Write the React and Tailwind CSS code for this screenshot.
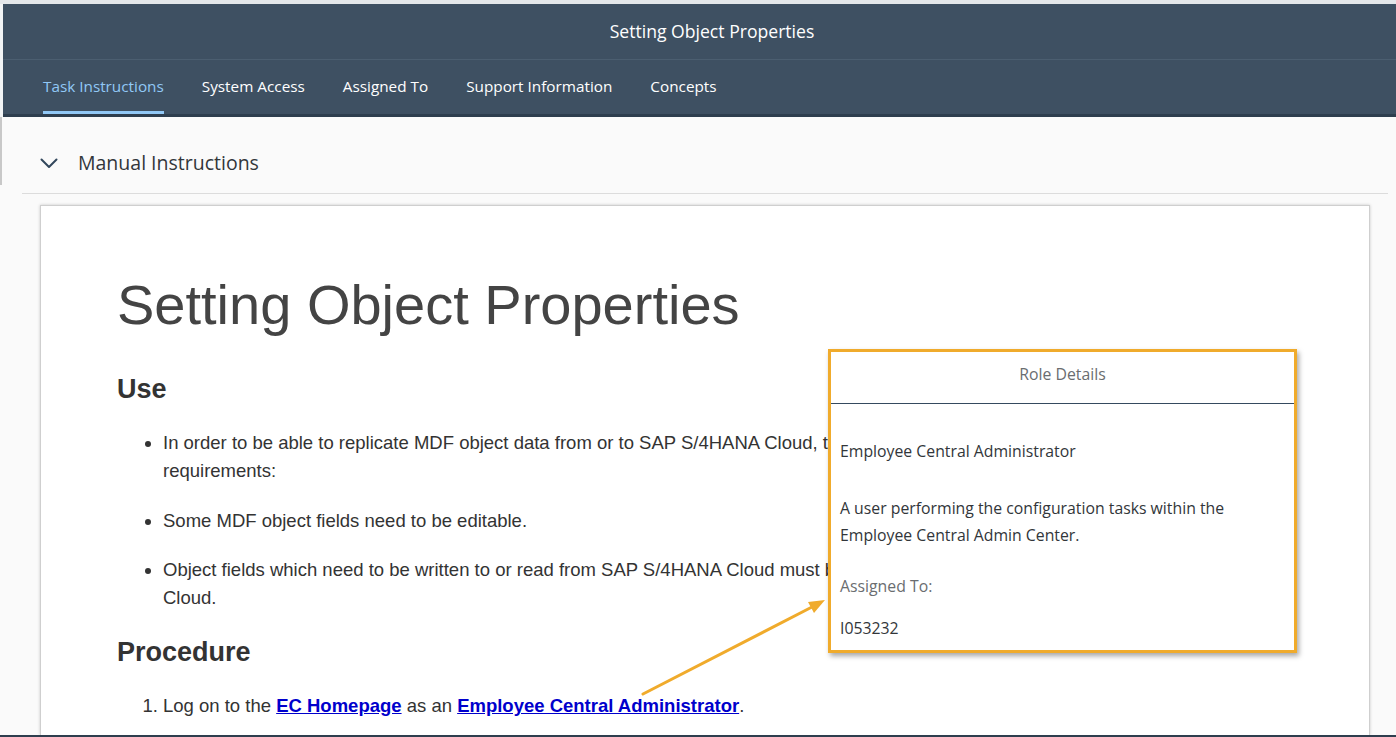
const tabs = ['Task Instructions', 'System Access', 'Assigned To', 'Support Information', 'Concepts']

const ui = { fontFamily: '"Open Sans", "Noto Sans", sans-serif' }
const doc = { fontFamily: '"Liberation Sans", Arial, sans-serif' }

function Header() {
  return (
    <div className="ml-[3px] bg-[#3e5062] text-white" style={ui}>
      <div className="h-[56px] flex items-center justify-center pl-[25px] text-[17.6px] border-b border-[#4b5e70]">
        Setting Object Properties
      </div>
      <div className="h-[57px] flex pl-[40px] gap-[38px] text-[15.3px] border-b-[3px] border-[#2e3e4e]">
        {tabs.map((t, i) => (
          <div
            key={t}
            className={
              i === 0
                ? 'flex items-center pt-[2px] border-b-[3px] border-[#91c8f6] text-[#91c8f6]'
                : 'flex items-center pt-[2px] border-b-[3px] border-transparent'
            }
          >
            {t}
          </div>
        ))}
      </div>
    </div>
  )
}

function RoleDetails() {
  return (
    <div
      className="absolute left-[828px] top-[349px] w-[469px] h-[304px] bg-white border-[3px] border-[#f0ab2c] shadow-[2px_3px_5px_rgba(0,0,0,0.35)] text-[15.8px] leading-[27px] text-[#32363a]"
      style={ui}
    >
      <div className="h-[52px] flex items-center justify-center pb-[6px] text-[#6a6d70] border-b border-[#354a5f]">
        Role Details
      </div>
      <div className="pl-[9px] pt-[34px]">
        <p>Employee Central Administrator</p>
        <p className="mt-[30px]">
          A user performing the configuration tasks within the
          <br />
          Employee Central Admin Center.
        </p>
        <p className="mt-[24px] text-[#6a6d70]">Assigned To:</p>
        <p className="mt-[15px]">I053232</p>
      </div>
    </div>
  )
}

function Arrow() {
  return (
    <svg className="absolute left-0 top-0 pointer-events-none" width="1396" height="737">
      <line x1="643" y1="694" x2="812" y2="607" stroke="#f0ab2c" strokeWidth="3" strokeLinecap="round" />
      <polygon points="825,600 814,613 808,602" fill="#f0ab2c" />
    </svg>
  )
}

export default function App() {
  return (
    <div className="relative w-[1396px] h-[737px] overflow-hidden bg-[#f2f4f5] flex flex-col">
      <div className="h-[4px] bg-[#e4e7ea]" />
      <Header />
      <div className="flex-1 bg-[#fafafa] flex flex-col overflow-hidden">
        <div className="h-[68px] border-l-2 border-[#c8c8c8] flex items-center pt-[24px] pl-[38px] gap-[20px] text-[#32363a]" style={ui}>
          <svg width="18" height="11" viewBox="0 0 18 11" className="shrink-0">
            <polyline points="1.5,1.5 9,9 16.5,1.5" fill="none" stroke="#32475c" strokeWidth="2" strokeLinecap="round" strokeLinejoin="round" />
          </svg>
          <span className="text-[19.5px]">Manual Instructions</span>
        </div>
        <div className="h-[8px]" />
        <div className="mx-[22px] w-[1366px] border-t border-[#dcdcdc]" />
        <div className="flex-1 mt-[11px] ml-[40px] w-[1330px] bg-white border border-[#cfcfcf] border-b-0 shadow-[0_0_3px_rgba(0,0,0,0.2)] pl-[76px] pr-[77px] pt-[67px] text-[#333]" style={doc}>
          <h1 className="text-[56px] leading-[64px] text-[#444]">Setting Object Properties</h1>
          <h2 className="mt-[35px] text-[27px] leading-[35px] font-bold">Use</h2>
          <ul className="mt-[22px] list-disc pl-[46px] text-[18.5px] leading-[28px]">
            <li>
              In order to be able to replicate MDF object data from or to SAP S/4HANA Cloud, the MDF objects must meet the following
              <br />
              requirements:
            </li>
            <li className="mt-[22px]">Some MDF object fields need to be editable.</li>
            <li className="mt-[21px]">
              Object fields which need to be written to or read from SAP S/4HANA Cloud must be mapped in SAP S/4HANA
              <br />
              Cloud.
            </li>
          </ul>
          <h2 className="mt-[23px] text-[27px] leading-[35px] font-bold">Procedure</h2>
          <ol className="mt-[22px] list-decimal pl-[46px] text-[18.5px] leading-[28px]">
            <li>
              Log on to the{' '}
              <a href="#" className="font-bold text-[#0000cc] underline">EC Homepage</a>
              {' '}as an{' '}
              <a href="#" className="font-bold text-[#0000cc] underline">Employee Central Administrator</a>.
            </li>
          </ol>
        </div>
      </div>
      <div className="h-[2px] bg-[#2e3e4e]" />
      <RoleDetails />
      <Arrow />
    </div>
  )
}
